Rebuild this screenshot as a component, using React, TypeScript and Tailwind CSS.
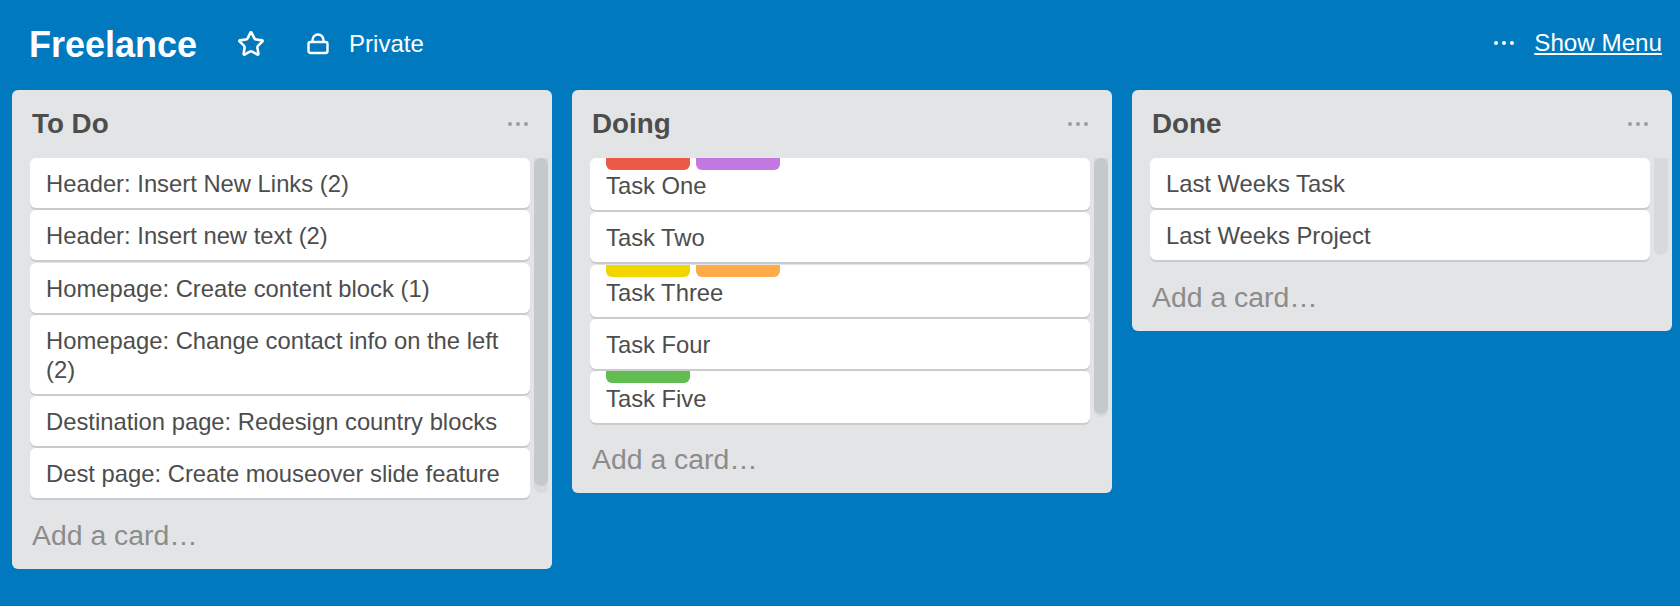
import { Star } from "lucide-react";

type Card = {
  title: string;
  labels?: string[];
};

const lists: { name: string; thumb: string; cards: Card[] }[] = [
  {
    name: "To Do",
    thumb: "h-[328px]",
    cards: [
      { title: "Header: Insert New Links (2)" },
      { title: "Header: Insert new text (2)" },
      { title: "Homepage: Create content block (1)" },
      { title: "Homepage: Change contact info on the left (2)" },
      { title: "Destination page: Redesign country blocks" },
      { title: "Dest page: Create mouseover slide feature" },
    ],
  },
  {
    name: "Doing",
    thumb: "h-[256px]",
    cards: [
      { title: "Task One", labels: ["bg-[#eb5a46]", "bg-[#c377e0]"] },
      { title: "Task Two" },
      { title: "Task Three", labels: ["bg-[#f2d600]", "bg-[#ffab4a]"] },
      { title: "Task Four" },
      { title: "Task Five", labels: ["bg-[#61bd4f]"] },
    ],
  },
  {
    name: "Done",
    thumb: "h-0",
    cards: [{ title: "Last Weeks Task" }, { title: "Last Weeks Project" }],
  },
];

function Dots({ className }: { className: string }) {
  return (
    <svg width="20" height="4" viewBox="0 0 20 4" className={className}>
      <circle cx="2" cy="2" r="2" fill="currentColor" />
      <circle cx="10" cy="2" r="2" fill="currentColor" />
      <circle cx="18" cy="2" r="2" fill="currentColor" />
    </svg>
  );
}

function Lock() {
  return (
    <svg width="22" height="22" viewBox="0 0 22 22" fill="none" stroke="currentColor" strokeWidth="2.4">
      <rect x="1.5" y="9" width="19" height="11" rx="2" />
      <path d="M5.5 9V7a5.5 5.5 0 0 1 11 0v2" />
    </svg>
  );
}

function TaskCard({ card }: { card: Card }) {
  return (
    <div
      className={`mb-[2.3px] rounded-[6px] bg-white px-4 pb-[10px] text-[23.8px] leading-[29px] text-[#4d4d4d] shadow-[0_2px_0_#c9cbcd] ${
        card.labels ? "" : "pt-[11px]"
      }`}
    >
      {card.labels && (
        <div className="mb-[1px] flex gap-[6px]">
          {card.labels.map((label) => (
            <span key={label} className={`h-3 w-[84px] rounded-b-[6px] ${label}`} />
          ))}
        </div>
      )}
      {card.title}
    </div>
  );
}

export default function App() {
  return (
    <div className="h-[606px] w-[1680px] overflow-hidden bg-[#0079bf] font-['Liberation_Sans',sans-serif]">
      <div className="flex h-[90px] items-center pb-[3px] pl-[29px] pr-[18px] text-white">
        <h1 className="mt-[3px] text-[36px] font-bold leading-none">Freelance</h1>
        <Star className="ml-[40px]" size={28} strokeWidth={2.2} />
        <div className="ml-[42px]">
          <Lock />
        </div>
        <span className="ml-[20px] text-[24px]">Private</span>
        <div className="ml-auto flex items-center gap-5">
          <Dots className="text-white" />
          <a className="text-[24.2px] underline underline-offset-2">Show Menu</a>
        </div>
      </div>

      <div className="flex items-start gap-5 pl-3">
        {lists.map((list) => (
          <div key={list.name} className="w-[540px] rounded-[6px] bg-[#e2e4e6]">
            <div className="flex h-[68px] items-center justify-between pl-[20px] pr-[24px]">
              <h2 className="text-[27.8px] font-bold text-[#4d4d4d]">{list.name}</h2>
              <Dots className="text-[#9a9c9f]" />
            </div>
            <div className="flex gap-[4px] pl-[18px] pr-1">
              <div className="w-[500px]">
                {list.cards.map((card) => (
                  <TaskCard key={card.title} card={card} />
                ))}
              </div>
              <div className="mb-[8px] w-[14px] rounded-b-[7px] bg-[#d6dadc]">
                <div className={`rounded-[7px] bg-[#c4c9cc] ${list.thumb}`} />
              </div>
            </div>
            <div className="px-5 pb-[12px] pt-[12px] text-[28.4px] leading-[44px] text-[#8c8c8c]">Add a card…</div>
          </div>
        ))}
      </div>
    </div>
  );
}
